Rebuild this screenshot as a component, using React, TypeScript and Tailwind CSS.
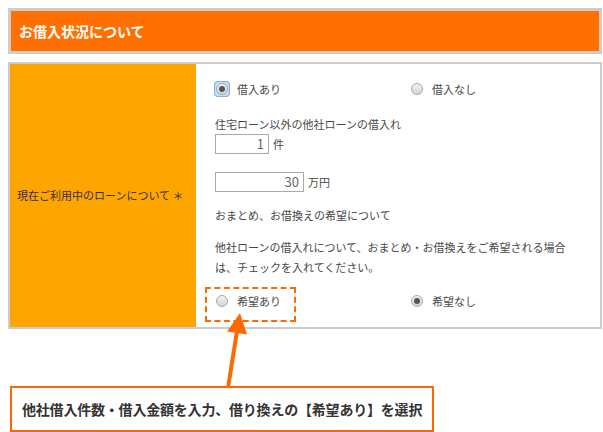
import React from 'react'

const font = { fontFamily: '"Noto Sans CJK JP", "Noto Sans", sans-serif' }

const Radio: React.FC<{ checked?: boolean; focused?: boolean; label: string }> = ({ checked, focused, label }) => (
  <label className="flex items-center gap-[8px] h-[20px]">
    <span
      className={`flex items-center justify-center w-[14px] h-[14px] rounded-[3px] ${focused ? 'bg-[#c5dcf5] ring-1 ring-[#7fb2ea]' : ''}`}
    >
      <span className="flex items-center justify-center w-[12px] h-[12px] rounded-full border border-[#a8a8a8] bg-gradient-to-b from-[#f2f2f2] to-[#d4d4d4]">
        {checked && <span className="w-[6px] h-[6px] rounded-full bg-[#555]" />}
      </span>
    </span>
    <span>{label}</span>
  </label>
)

export default function App() {
  return (
    <div className="relative w-[603px] h-[432px] bg-white overflow-hidden text-[#333]" style={font}>
      <div className="pt-[8px] pl-[8px] w-[602px]">
        <div className="h-[46px] border-[3px] border-[#cccccc] bg-[#ff7000] flex items-center pl-[8px]">
          <h2 className="text-white text-[14px] font-bold">お借入状況について</h2>
        </div>

        <div className="mt-[8px] border-2 border-[#cccccc] flex h-[267px]">
          <div className="w-[186px] bg-[#ffa500] flex items-center pl-[7px] text-[11px] text-[#333]">
            現在ご利用中のローンについて ＊
          </div>
          <div className="flex-1 bg-white pl-[19px] pt-[15px] text-[11px] leading-[20px] text-[#484848]">
            <div className="grid grid-cols-[195px_1fr]">
              <Radio checked focused label="借入あり" />
              <Radio label="借入なし" />
            </div>

            <p className="mt-[15px]">住宅ローン以外の他社ローンの借入れ</p>
            <div className="flex items-center gap-[4px]">
              <span className="w-[54px] h-[20px] border border-[#a9a9a9] text-right pr-[4px] text-[13px] leading-[18px] text-[#666]">1</span>
              <span>件</span>
            </div>
            <div className="mt-[18px] flex items-center gap-[4px]">
              <span className="w-[89px] h-[20px] border border-[#a9a9a9] text-right pr-[4px] text-[13px] leading-[18px] text-[#666]">30</span>
              <span>万円</span>
            </div>

            <p className="mt-[13px]">おまとめ、お借換えの希望について</p>
            <p className="mt-[12px] w-[360px]">
              他社ローンの借入れについて、おまとめ・お借換えをご希望される場合は、チェックを入れてください。
            </p>

            <div className="relative mt-[14px] grid grid-cols-[195px_1fr]">
              <span className="absolute left-[-10px] top-[-4px] w-[91px] h-[35px] border-2 border-dashed border-[#ff6a00]" />
              <Radio label="希望あり" />
              <Radio checked label="希望なし" />
            </div>
          </div>
        </div>
      </div>

      <div className="mt-[57px] ml-[10px] w-[424px] h-[46px] border-2 border-[#ff6600] bg-white flex items-center pl-[10px]">
        <span className="text-[14px] font-bold text-[#333] tracking-[-0.2px]">他社借入件数・借入金額を入力、借り換えの【希望あり】を選択</span>
      </div>

      <svg className="absolute left-0 top-0 pointer-events-none" width="603" height="432">
        <line x1="228" y1="388" x2="237.5" y2="328" stroke="#ff6a00" strokeWidth="4" />
        <polygon points="240,313 227,331.5 247,334.5" fill="#ff6a00" />
      </svg>
    </div>
  )
}
